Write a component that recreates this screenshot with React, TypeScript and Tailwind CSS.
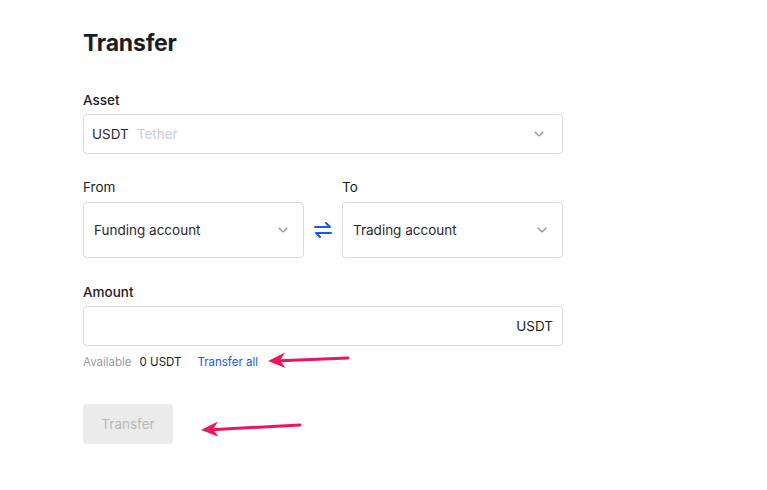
import { ChevronDown } from 'lucide-react'

function Chevron() {
  return <ChevronDown className="h-4 w-4 text-[#8a8f99]" strokeWidth={1.75} />
}

function SwapIcon() {
  return (
    <svg width="18" height="16" viewBox="0 0 18 16" fill="none" stroke="#1a56f5" strokeWidth="2" strokeLinecap="round" strokeLinejoin="round">
      <path d="M1 5h15M12 1l4 4" />
      <path d="M17 11H2M6 15l-4-4" />
    </svg>
  )
}

function Arrow({ className, x1, y1, x2, y2 }: { className: string; x1: number; y1: number; x2: number; y2: number }) {
  // arrow drawn from tail (x2,y2) to tip (x1,y1)
  const ang = Math.atan2(y2 - y1, x2 - x1)
  const len = 19
  const spread = 0.42
  const ax = x1 + len * Math.cos(ang + spread)
  const ay = y1 + len * Math.sin(ang + spread)
  const bx = x1 + len * Math.cos(ang - spread)
  const by = y1 + len * Math.sin(ang - spread)
  return (
    <svg className={className} width="767" height="490" viewBox="0 0 767 490" fill="none">
      <path d={`M${x1 + 6} ${y1} L${x2} ${y2}`} stroke="#f0145a" strokeWidth="3" strokeLinecap="round" />
      <path d={`M${x1} ${y1} L${ax} ${ay} L${x1 + 12 * Math.cos(ang)} ${y1 + 12 * Math.sin(ang)} L${bx} ${by} Z`} fill="#f0145a" />
    </svg>
  )
}

export default function App() {
  return (
    <div className="relative h-[490px] w-[767px] overflow-hidden bg-white text-[#1c1c1e]" style={{ fontFamily: 'Inter, "Noto Sans", sans-serif' }}>
      <div className="ml-[83px] w-[480px] pt-[27px]">
        <h1 className="text-[23px] font-bold leading-8 tracking-[-0.2px] text-[#1c1c24]">Transfer</h1>

        <div className="mt-[31px] text-[13.5px] font-medium leading-5">Asset</div>
        <div className="mt-1 flex h-10 items-center justify-between rounded border border-[#dcdcdc] pl-[8px] pr-[15px] text-[13.5px]">
          <div className="flex items-center gap-2">
            <span className="text-[#2a2a2e]">USDT</span>
            <span className="text-[#c9ced9]">Tether</span>
          </div>
          <Chevron />
        </div>

        <div className="mt-[23px] grid grid-cols-[1fr_38px_1fr] text-[13.5px] leading-5">
          <div>From</div>
          <div />
          <div>To</div>
        </div>
        <div className="mt-[5px] grid grid-cols-[1fr_38px_1fr] items-center">
          <div className="flex h-14 items-center justify-between rounded-sm border border-[#dcdcdc] pl-[10px] pr-[12px] text-[13.5px] text-[#2a2a2e]">
            <span>Funding account</span>
            <Chevron />
          </div>
          <div className="flex justify-center">
            <SwapIcon />
          </div>
          <div className="flex h-14 items-center justify-between rounded-sm border border-[#dcdcdc] pl-[10px] pr-[12px] text-[13.5px] text-[#2a2a2e]">
            <span>Trading account</span>
            <Chevron />
          </div>
        </div>

        <div className="mt-6 text-[13.5px] font-medium leading-5">Amount</div>
        <div className="mt-1 flex h-10 items-center justify-end rounded border border-[#dcdcdc] pr-[9px] text-[13.5px] text-[#1c1c1e]">
          USDT
        </div>

        <div className="mt-2 flex items-center text-[11.5px] leading-4">
          <span className="text-[#9a9a9a]">Available</span>
          <span className="ml-2 text-[#1c1c1e]">0 USDT</span>
          <span className="ml-4 text-[#1a56f5]">Transfer all</span>
        </div>

        <button className="mt-[34px] flex h-10 w-[90px] items-center justify-center rounded bg-[#ebebeb] text-[13.5px] text-[#b8b8b8]">
          Transfer
        </button>
      </div>

      <Arrow className="pointer-events-none absolute left-0 top-0" x1={268} y1={361} x2={348} y2={358} />
      <Arrow className="pointer-events-none absolute left-0 top-0" x1={201} y1={430} x2={300} y2={425} />
    </div>
  )
}
